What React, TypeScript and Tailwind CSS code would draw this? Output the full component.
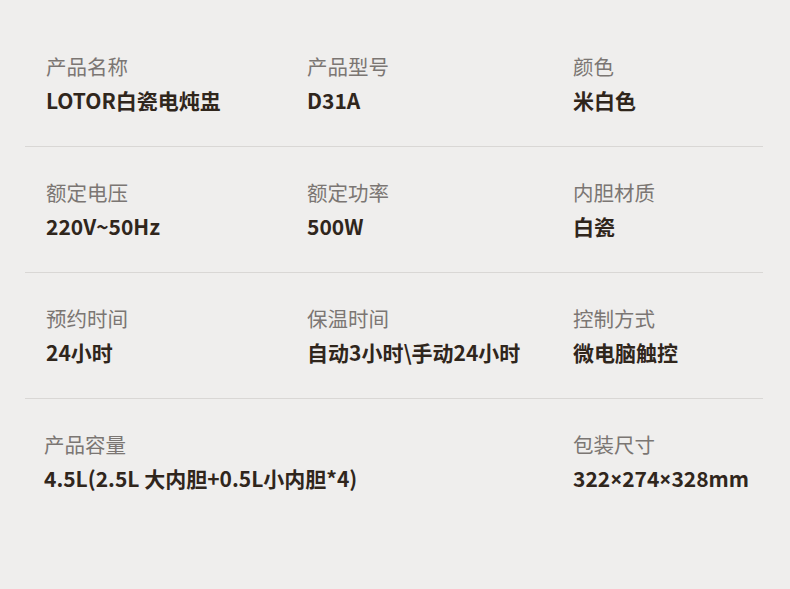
import React from "react";

type Cell = { label: string; value: React.ReactNode; key: string };

const X = () => <span style={{ fontFamily: '"Noto Sans", sans-serif' }}>×</span>;

const rows: Cell[][] = [
  [
    { key: "a", label: "产品名称", value: "LOTOR白瓷电炖盅" },
    { key: "b", label: "产品型号", value: "D31A" },
    { key: "c", label: "颜色", value: "米白色" },
  ],
  [
    { key: "d", label: "额定电压", value: "220V~50Hz" },
    { key: "e", label: "额定功率", value: "500W" },
    { key: "f", label: "内胆材质", value: "白瓷" },
  ],
  [
    { key: "g", label: "预约时间", value: "24小时" },
    { key: "h", label: "保温时间", value: "自动3小时\\手动24小时" },
    { key: "i", label: "控制方式", value: "微电脑触控" },
  ],
];

const font = { fontFamily: '"Noto Sans CJK SC", "Noto Sans", sans-serif' };

function Item({ c, className = "" }: { c: Cell; className?: string }) {
  return (
    <div className={`flex flex-col gap-[6px] ${className}`}>
      <div className="text-[20.5px] leading-[28px] text-[#7b7673] whitespace-nowrap">{c.label}</div>
      <div className="text-[21px] leading-[28px] font-bold text-[#30261c] whitespace-nowrap">{c.value}</div>
    </div>
  );
}

export default function App() {
  return (
    <div className="w-[790px] h-[589px] bg-[#efeeed] overflow-hidden" style={font}>
      <div className="ml-[25px] mr-[27px] pt-[21px]">
        {rows.map((r, i) => (
          <div key={i} className="border-b border-[#d9d7d5]">
            <div className="grid grid-cols-[261px_266px_1fr] pl-[21px] pt-[31px] pb-[32px]">
              {r.map((c) => (
                <Item key={c.key} c={c} />
              ))}
            </div>
          </div>
        ))}
        <div className="grid grid-cols-[527px_1fr] pl-[19px] pt-[31px]">
          <Item c={{ key: "j", label: "产品容量", value: "4.5L(2.5L 大内胆+0.5L小内胆*4)" }} />
          <Item
            c={{
              key: "k",
              label: "包装尺寸",
              value: (
                <>
                  322<X />274<X />328mm
                </>
              ),
            }}
            className="ml-[2px]"
          />
        </div>
      </div>
    </div>
  );
}
